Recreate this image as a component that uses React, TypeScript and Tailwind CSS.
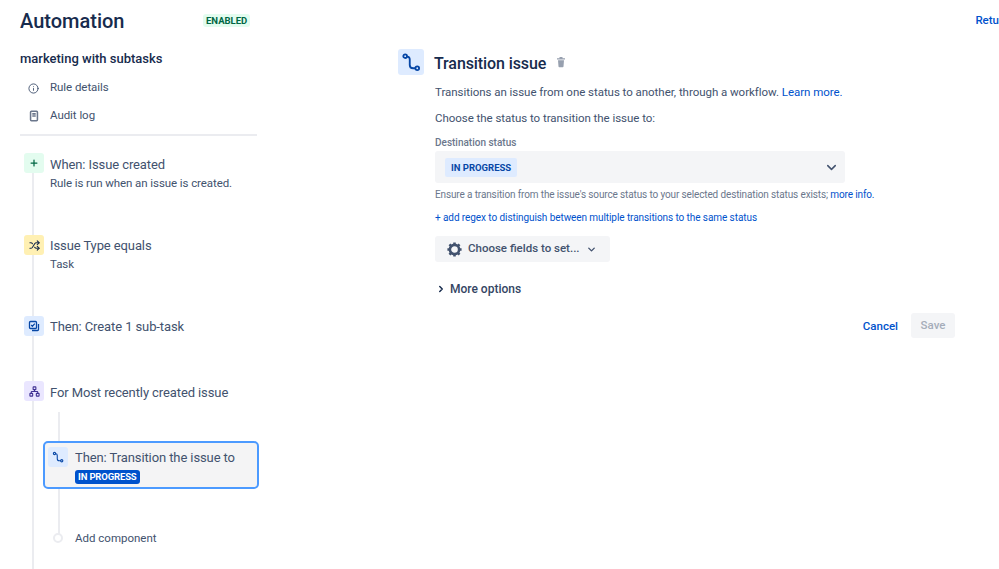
import React from "react";
import { Info, Plus, Shuffle, Network, ChevronDown, ChevronRight } from "lucide-react";

function TransitionIcon({ className }: { className?: string }) {
  return (
    <svg viewBox="0 0 24 24" className={className} fill="none" stroke="#0747a6" strokeWidth="2.2" strokeLinecap="round">
      <circle cx="5" cy="5" r="2.2" />
      <circle cx="19.5" cy="19.5" r="2.2" />
      <path d="M7.5 5.5 C10.5 5.5 10.5 7 10.5 9 V15.5 C10.5 18 12 19.5 14.5 19.5 H17" />
    </svg>
  );
}

function IconBox({ bg, children }: { bg: string; children: React.ReactNode }) {
  return <div className={`flex h-5 w-5 shrink-0 items-center justify-center rounded-[3px] ${bg}`}>{children}</div>;
}

function Step({ box, title, sub, className = "", titleClass = "pt-[1px]" }: { box: React.ReactNode; title: string; sub?: string; className?: string; titleClass?: string }) {
  return (
    <div className={`relative ml-1 flex gap-[6px] ${className}`}>
      {box}
      <div className="min-w-0">
        <div className={`text-[13px] leading-5 tracking-[-0.1px] text-[#42526e] ${titleClass}`}>{title}</div>
        {sub && <div className="-mt-[1px] text-[11.5px] leading-[18px] tracking-[-0.08px] text-[#42526e]">{sub}</div>}
      </div>
    </div>
  );
}

export default function App() {
  return (
    <div className="flex h-[569px] w-[999px] overflow-hidden bg-white font-['Roboto',sans-serif] text-[#42526e]">
      <aside className="relative w-[398px] shrink-0 pl-5">
        <div className="absolute bottom-0 left-[32px] top-[170px] w-[2px] bg-[#ebecf0]" />
        <div className="absolute bottom-[31px] left-[58px] top-[412px] w-[2px] bg-[#ebecf0]" />

        <div className="flex h-[42px] items-center">
          <h1 className="w-[183px] text-[20px] font-medium leading-6 text-[#172b4d]">Automation</h1>
          <span className="-mt-[2px] rounded-[3px] bg-[#e3fcef] px-[3px] text-[9.5px] font-bold leading-[13px] text-[#006644]">ENABLED</span>
        </div>
        <div className="mt-[7px] text-[13px] font-medium leading-5 text-[#172b4d]">marketing with subtasks</div>
        <div className="mt-[10px] flex h-[18px] items-center gap-[11px] pl-2 text-[11.5px] tracking-[-0.05px]">
          <Info size={11} strokeWidth={2} className="text-[#42526e]" />
          <span>Rule details</span>
        </div>
        <div className="mt-[10px] flex h-[18px] items-center gap-[11px] pl-2 text-[11.5px] tracking-[-0.05px]">
          <svg viewBox="0 0 12 14" className="h-[12px] w-[12px]" fill="none" stroke="#6b778c" strokeWidth="1.8">
            <rect x="2" y="1.5" width="8" height="11" rx="1" />
            <path d="M4 4.5h4M4 7h4" />
          </svg>
          <span className="-ml-[1px]">Audit log</span>
        </div>
        <div className="mt-[9px] h-[2px] w-[237px] bg-[#ebecf0]" />

        <Step
          className="mt-[17px]"
          titleClass="pt-[2px]"
          box={<IconBox bg="bg-[#e3fcef]"><Plus size={10} strokeWidth={3} className="text-[#006644]" /></IconBox>}
          title="When: Issue created"
          sub="Rule is run when an issue is created."
        />
        <Step
          className="mt-[43px]"
          box={<IconBox bg="bg-[#fff0b3]"><Shuffle size={11} strokeWidth={2.4} className="text-[#172b4d]" /></IconBox>}
          title="Issue Type equals"
          sub="Task"
        />
        <Step
          className="mt-[43px]"
          box={
            <IconBox bg="bg-[#deebff]">
              <svg viewBox="0 0 12 12" className="h-3 w-3" fill="none" stroke="#0747a6" strokeWidth="1.3">
                <rect x="1.5" y="1.5" width="7" height="7" rx="1" />
                <path d="M3.2 5l1.2 1.2L6.8 3.6" />
                <path d="M10.5 4v5.5a1 1 0 0 1-1 1H4" />
              </svg>
            </IconBox>
          }
          title="Then: Create 1 sub-task"
        />
        <Step
          className="mt-[44px]"
          titleClass="pt-[2px]"
          box={<IconBox bg="bg-[#eae6ff]"><Network size={11} strokeWidth={2.4} className="text-[#403294]" /></IconBox>}
          title="For Most recently created issue"
        />

        <div className="relative ml-[23px] mt-[38px] flex h-[48px] w-[216px] gap-[7px] rounded-[5px] border-2 border-[#4c9aff] bg-[#f4f4f5] pl-[3px] pt-[4px]">
          <IconBox bg="bg-[#deebff]"><TransitionIcon className="h-3 w-3" /></IconBox>
          <div>
            <div className="pt-[1px] text-[13px] leading-5 tracking-[-0.1px] text-[#42526e]">Then: Transition the issue to</div>
            <span className="mt-[2px] block w-fit rounded-[3px] bg-[#0052cc] px-[3px] text-[9.5px] font-bold leading-[14px] tracking-[-0.15px] text-white">IN PROGRESS</span>
          </div>
        </div>

        <div className="relative ml-[33px] mt-[41px] flex items-center gap-[12px]">
          <div className="h-[10px] w-[10px] rounded-full border-2 border-[#ebecf0] bg-white" />
          <span className="text-[11.5px] leading-4">Add component</span>
        </div>
      </aside>

      <main className="min-w-0 flex-1">
        <div className="flex justify-end pt-[12px]">
          <a className="whitespace-nowrap text-[11.5px] font-medium leading-4 text-[#0052cc]">Retu</a>
        </div>
        <div className="mt-[21px] w-[557px]">
          <div className="flex h-[26px] items-center">
            <div className="flex h-[26px] w-[26px] items-center justify-center rounded-[3px] bg-[#deebff]">
              <TransitionIcon className="h-[20px] w-[20px]" />
            </div>
            <h2 className="ml-[10px] pt-[3px] text-[16px] font-medium leading-6 tracking-[-0.1px] text-[#172b4d]">Transition issue</h2>
            <svg viewBox="0 0 12 12" className="ml-[9px] h-[12px] w-[12px]" fill="#97a0af">
              <path d="M2 2.2h8v1.3H2zM4.5 1h3v1.2h-3zM3 4.3h6l-.5 6.2a.8.8 0 0 1-.8.7H4.3a.8.8 0 0 1-.8-.7z" />
            </svg>
          </div>
          <div className="ml-[37px]">
            <p className="mt-[9px] text-[11.5px] leading-4 tracking-[-0.04px] text-[#42526e]">
              Transitions an issue from one status to another, through a workflow. <a className="text-[#0052cc]">Learn more.</a>
            </p>
            <p className="mt-[10px] text-[11.5px] leading-4 tracking-[-0.04px] text-[#42526e]">Choose the status to transition the issue to:</p>
            <div className="mt-[10px] text-[10px] font-medium leading-[14px] text-[#6b778c]">Destination status</div>
            <div className="mt-[1px] flex h-[32px] w-[410px] items-center justify-between rounded-[3px] bg-[#f4f5f7] pl-[10px] pr-[6px]">
              <span className="rounded-[2px] bg-[#deebff] px-[6px] text-[9.5px] font-bold leading-[19px] text-[#0747a6]">IN PROGRESS</span>
              <ChevronDown size={15} strokeWidth={2.4} className="text-[#42526e]" />
            </div>
            <p className="mt-[5px] text-[10px] leading-[14px] tracking-[-0.13px] text-[#6b778c]">
              Ensure a transition from the issue's source status to your selected destination status exists; <a className="text-[#0052cc]">more info.</a>
            </p>
            <p className="mt-[9px] text-[10px] leading-[14px] tracking-[-0.08px] text-[#0052cc]">+ add regex to distinguish between multiple transitions to the same status</p>
            <button className="mt-[11px] flex h-[26px] w-[175px] items-center rounded-[3px] bg-[#f4f5f7] pl-[11px]">
              <svg viewBox="0 0 24 24" className="h-[17px] w-[17px]" fill="none" stroke="#42526e">
                <circle cx="12" cy="12" r="6.5" strokeWidth="3.6" />
                <path strokeWidth="3.6" d="M12 2v3M12 19v3M2 12h3M19 12h3M4.9 4.9l2.1 2.1M17 17l2.1 2.1M4.9 19.1L7 17M17 7l2.1-2.1" />
              </svg>
              <span className="ml-[5px] text-[11.5px] font-medium text-[#42526e]">Choose fields to set...</span>
              <ChevronDown size={11} strokeWidth={3} className="ml-[6px] text-[#42526e]" />
            </button>
            <div className="mt-[19px] flex items-center text-[12px] font-medium leading-4 text-[#344563]">
              <ChevronRight size={10} strokeWidth={3.5} className="ml-[1px] text-[#172b4d]" />
              <span className="ml-[4px]">More options</span>
            </div>
          </div>
          <div className="mt-[16px] flex items-center justify-end gap-[13px]">
            <a className="pt-[2px] text-[11.5px] font-medium text-[#0052cc]">Cancel</a>
            <button className="h-[25px] w-[44px] rounded-[3px] bg-[#f4f5f7] text-[11.5px] font-medium text-[#a5adba]">Save</button>
          </div>
        </div>
      </main>
    </div>
  );
}
